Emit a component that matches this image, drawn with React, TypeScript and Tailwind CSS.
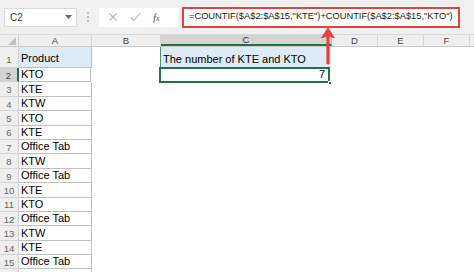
import React from "react";

const data = [
  "KTO",
  "KTE",
  "KTW",
  "KTO",
  "KTE",
  "Office Tab",
  "KTW",
  "Office Tab",
  "KTE",
  "KTO",
  "Office Tab",
  "KTW",
  "KTE",
  "Office Tab",
];

function RowHeader({ n, h, selected }: { n: number | null; h: string; selected?: boolean }) {
  return (
    <div
      className={`w-[19px] shrink-0 flex items-end justify-center pb-[1px] text-[9.5px] leading-none border-b border-[#d4d4d4] ${
        selected ? "bg-[#d3d3d3] border-r-2 border-r-[#217346] text-[#444]" : "bg-[#efefef] border-r border-r-[#cfcfcf] text-[#666]"
      } ${h}`}
    >
      {n}
    </div>
  );
}

export default function App() {
  return (
    <div
      className="relative w-[474px] h-[272px] overflow-hidden bg-white text-black"
      style={{ fontFamily: '"Liberation Sans", Arial, sans-serif' }}
    >
      {/* Formula toolbar */}
      <div className="h-[35px] bg-[#f0f0f0] flex items-center border-b border-[#d9d9d9]">
        <div className="ml-[4px] w-[73px] h-[19px] bg-white border border-[#dadada] flex items-center justify-between pl-[5px] pr-[4px] text-[10px] text-[#333]">
          <span>C2</span>
          <svg width="7" height="4" viewBox="0 0 7 4">
            <path d="M0 0 L7 0 L3.5 4 Z" fill="#6b6b6b" />
          </svg>
        </div>
        <div className="w-[22px] flex flex-col items-center justify-center gap-[2px]">
          <span className="w-[2px] h-[2px] bg-[#bdbdbd]" />
          <span className="w-[2px] h-[2px] bg-[#bdbdbd]" />
          <span className="w-[2px] h-[2px] bg-[#bdbdbd]" />
        </div>
        <div className="w-[80px] h-[19px] bg-white flex items-center">
          <svg width="10" height="10" viewBox="0 0 10 10" className="ml-[9px]">
            <path d="M1.5 1.5 L8.5 8.5 M8.5 1.5 L1.5 8.5" stroke="#b5b5b5" strokeWidth="1.1" />
          </svg>
          <svg width="11" height="10" viewBox="0 0 11 10" className="ml-[12px]">
            <path d="M1 5.5 L4 8.5 L10 1.5" stroke="#b5b5b5" strokeWidth="1.1" fill="none" />
          </svg>
          <span
            className="ml-[12px] text-[11px] italic text-[#555] leading-none"
            style={{ fontFamily: '"Liberation Serif", "Times New Roman", serif' }}
          >
            f<span className="text-[8px]">x</span>
          </span>
        </div>
        <div className="ml-[3px] w-[278px] h-[21px] bg-white border-2 border-[#e0443c] flex items-center pl-[5px] text-[9.3px] text-[#222] whitespace-nowrap">
          =COUNTIF($A$2:$A$15,"KTE")+COUNTIF($A$2:$A$15,"KTO")
        </div>
      </div>

      {/* Column headers */}
      <div className="flex h-[12px] bg-[#efefef] border-b border-[#c9c9c9] text-[9.5px] text-[#444] leading-none">
        <div className="w-[19px] shrink-0 border-r border-[#cfcfcf] relative">
          <svg width="8" height="8" viewBox="0 0 8 8" className="absolute right-[2px] bottom-[1px]">
            <path d="M8 0 L8 8 L0 8 Z" fill="#c3c3c3" />
          </svg>
        </div>
        <div className="w-[73px] shrink-0 border-r border-[#d6d6d6] flex items-center justify-center">A</div>
        <div className="w-[69px] shrink-0 border-r border-[#d6d6d6] flex items-center justify-center">B</div>
        <div className="w-[171px] shrink-0 border-r border-[#bdbdbd] bg-[#d4d4d4] border-b-2 border-b-[#217346] flex items-center justify-center text-[#333]">
          C
        </div>
        <div className="w-[46px] shrink-0 border-r border-[#d6d6d6] flex items-center justify-center">D</div>
        <div className="w-[46px] shrink-0 border-r border-[#d6d6d6] flex items-center justify-center">E</div>
        <div className="w-[46px] shrink-0 border-r border-[#d6d6d6] flex items-center justify-center">F</div>
        <div className="flex-1" />
      </div>

      {/* Row 1 */}
      <div className="flex h-[21px] text-[11px] leading-none">
        <RowHeader n={1} h="h-[21px] pb-[3px]" />
        <div className="w-[73px] shrink-0 bg-[#ddebf7] border-r border-b border-[#bfbfbf] flex items-end pl-[2px] pb-[3px]">
          Product
        </div>
        <div className="w-[69px] shrink-0" />
        <div className="w-[171px] shrink-0 bg-[#ddebf7] border-l border-[#5a8a6e] flex items-end pl-[2px] pb-[3px] -ml-[1px]">
          The number of KTE and KTO
        </div>
        <div className="flex-1" />
      </div>

      {/* Rows 2..16 */}
      {data.concat([""]).map((v, i) => {
        const n = i + 2;
        return (
          <div key={n} className="flex h-[14.4px] text-[11px] leading-none">
            <RowHeader n={n <= 15 ? n : null} h="h-[14.4px]" selected={n === 2} />
            <div
              className={`${n === 2 ? "w-[72px]" : "w-[73px]"} shrink-0 border-r border-b border-[#bfbfbf] flex items-end pl-[2px] pb-[1px]`}
            >
              {v}
            </div>
            <div className="w-[69px] shrink-0" />
            {n === 2 ? (
              <div className="relative w-[171px] shrink-0 -ml-[1px]">
                <div className="absolute -top-[1px] left-0 right-0 -bottom-[1px] border-2 border-[#217346] flex items-end justify-end pr-[3px] pb-[1px]">
                  7
                </div>
                <div className="absolute -right-[2px] -bottom-[3px] w-[4px] h-[4px] bg-[#217346] border border-white" />
              </div>
            ) : null}
            <div className="flex-1" />
          </div>
        );
      })}

      {/* Red arrow */}
      <svg width="16" height="38" viewBox="0 0 16 38" className="absolute left-[320px] top-[27px]">
        <path d="M8 10 L8 36" stroke="#e8413b" strokeWidth="3.2" strokeLinecap="round" />
        <path d="M8 1 L14.5 11 L8 8.5 L1.5 11 Z" fill="#e8413b" stroke="#e8413b" strokeWidth="1" strokeLinejoin="round" />
      </svg>
    </div>
  );
}
